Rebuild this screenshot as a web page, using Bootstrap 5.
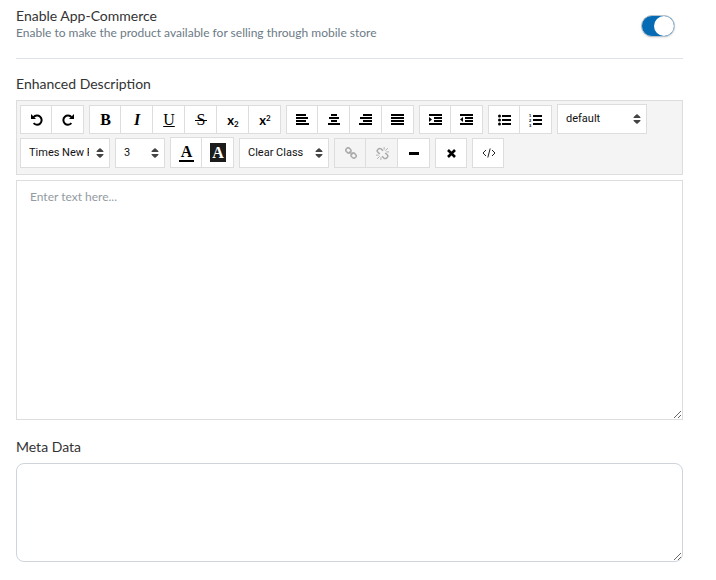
<!DOCTYPE html>
<html lang="en">
<head>
<meta charset="utf-8">
<meta name="viewport" content="width=device-width, initial-scale=1">
<title>Product settings</title>
<link href="https://cdn.jsdelivr.net/npm/bootstrap@5.3.0/dist/css/bootstrap.min.css" rel="stylesheet">
<style>
body { font-family: Lato, sans-serif; font-size: 14px; line-height: 18px; color: #333; background: #fff; }
.page { padding: 7px 33px 0 16px; }
.hint { font-size: 12px; line-height: 16px; color: #6c7a86; }
.setting { height: 52px; }
.setting-switch { min-height: 0; padding: 0 8px 0 0; margin: 8px 0 0; }
.setting-switch .form-check-input {
  width: 34px; height: 22px; margin: 0; float: none; display: block; border: 1px solid #b9c3cb;
  box-shadow: 0 1px 2px rgba(0,0,0,.1);
  background-size: 20px 20px;
}
.setting-switch .form-check-input:checked {
  background-color: #046bb4;
  background-image: url("data:image/svg+xml,%3csvg xmlns='http://www.w3.org/2000/svg' viewBox='0 0 20 20'%3e%3ccircle r='10' cx='10' cy='10' fill='%23fff'/%3e%3c/svg%3e");
}
.field-label { margin: 16px 0 7px; display: block; }
.editor-text + .field-label { margin-top: 18px; }
.editor-bar { background: #f4f4f4; border: 1px solid #ddd; padding: 3px 3px 6px; gap: 3px 5px; }
.tool-group .btn {
  --bs-btn-border-radius: 0; --bs-btn-bg: #fff; --bs-btn-border-color: #ddd; --bs-btn-color: #000;
  --bs-btn-disabled-bg: #f4f4f4; --bs-btn-disabled-border-color: #ddd; --bs-btn-disabled-color: #aaa; --bs-btn-disabled-opacity: 1;
  width: 32px; height: 30px; padding: 0 0 0 1px; line-height: 20px;
  display: flex; align-items: center; justify-content: center;
}
.tool-group .btn + .btn { border-left: 0; }
.tool-group.short .btn { height: 29px; }
.tool-group.tall .btn { height: 31px; }
.serif { font: bold 16px/18px "Liberation Serif", serif; }
.script { font: bold 13px/18px Lato, sans-serif; }
.script sub, .script sup { font-size: 8px; }
.ink { border-bottom: 2px solid #000; padding: 0 2px; line-height: 16px; }
.paper { background: #1c1c1c; color: #fff; width: 16px; line-height: 19px; text-align: center; }
.editor-bar .form-select {
  width: 90px; height: 30px; border: 1px solid #ddd; border-radius: 0; padding: 0 20px 0 8px;
  font: 11px/16px Roboto, sans-serif; color: #111; background-color: #fff;
  background-image: url("data:image/svg+xml,%3csvg xmlns='http://www.w3.org/2000/svg' viewBox='0 0 8 10'%3e%3cpath d='M1 4 Q0 4 .7 3 L3.3 .5 Q4 0 4.7 .5 L7.3 3 Q8 4 7 4ZM1 6 Q0 6 .7 7 L3.3 9.5 Q4 10 4.7 9.5 L7.3 7 Q8 6 7 6Z' fill='%23444'/%3e%3c/svg%3e");
  background-size: 8px 10px; background-position: right 5px center;
}
.editor-bar .form-select.narrow { width: 50px; }
.editor-text { height: 240px; margin-top: 5px; border: 1px solid #ddd; border-radius: 0; padding: 7px 13px; font-size: 12px; line-height: 18px; }
.editor-text::placeholder { color: #939ba2; }
.meta-text { height: 99px; border: 1px solid #ced4da; border-radius: 8px; }
svg { display: block; }
</style>
</head>
<body>
<main class="page">
  <div class="setting d-flex justify-content-between border-bottom">
    <div>
      <label for="appCommerce" class="d-block">Enable App-Commerce</label>
      <div class="hint" id="appHint">Enable to make the product available for selling through mobile store</div>
    </div>
    <div class="form-check form-switch setting-switch">
      <input class="form-check-input" type="checkbox" role="switch" id="appCommerce" aria-describedby="appHint" checked>
    </div>
  </div>

  <label for="description" class="field-label">Enhanced Description</label>
  <div class="editor-bar d-flex flex-wrap align-items-end" role="toolbar" aria-label="Formatting">
    <div class="tool-group short d-flex">
      <button type="button" class="btn" aria-label="Undo"><svg width="12" height="12" viewBox="0 0 12 12" fill="none" stroke="#000" stroke-width="2"><path d="M2.500 3.200A4.600 4.600 0 1 1 2.600 9.200"/><path d="M0 0v5h5z" fill="#000" stroke="none"/></svg></button>
      <button type="button" class="btn" aria-label="Redo"><svg width="12" height="12" viewBox="0 0 12 12" fill="none" stroke="#000" stroke-width="2"><path d="M9.500 3.200A4.600 4.600 0 1 0 9.400 9.200"/><path d="M12 0v5H7z" fill="#000" stroke="none"/></svg></button>
    </div>
    <div class="tool-group short d-flex">
      <button type="button" class="btn" aria-label="Bold"><span class="serif">B</span></button>
      <button type="button" class="btn" aria-label="Italic"><em class="serif fst-italic">I</em></button>
      <button type="button" class="btn" aria-label="Underline"><u class="serif fw-normal">U</u></button>
      <button type="button" class="btn" aria-label="Strikethrough"><svg width="14" height="18" viewBox="0 0 14 18"><text x="7" y="14" text-anchor="middle" font-family="Liberation Serif, serif" font-size="16">S</text><path d="M1 9.500h12" stroke="#000"/></svg></button>
      <button type="button" class="btn" aria-label="Subscript"><span class="script">x<sub>2</sub></span></button>
      <button type="button" class="btn" aria-label="Superscript"><span class="script">x<sup>2</sup></span></button>
    </div>
    <div class="tool-group short d-flex">
      <button type="button" class="btn" aria-label="Align left"><svg width="14" height="11" viewBox="0 0 14 11" stroke="#000" stroke-width="2"><path d="M0 1h10M0 4h12M0 7h10M0 10h13"/></svg></button>
      <button type="button" class="btn" aria-label="Align center"><svg width="14" height="11" viewBox="0 0 14 11" stroke="#000" stroke-width="2"><path d="M4 1h6M2 4h10M4 7h6M1 10h12"/></svg></button>
      <button type="button" class="btn" aria-label="Align right"><svg width="14" height="11" viewBox="0 0 14 11" stroke="#000" stroke-width="2"><path d="M4 1h9M1 4h12M4 7h9M0 10h13"/></svg></button>
      <button type="button" class="btn" aria-label="Justify"><svg width="14" height="11" viewBox="0 0 14 11" stroke="#000" stroke-width="2"><path d="M0 1h13M0 4h13M0 7h13M0 10h13"/></svg></button>
    </div>
    <div class="tool-group short d-flex">
      <button type="button" class="btn" aria-label="Indent"><svg width="14" height="12" viewBox="0 0 14 12" stroke="#000" stroke-width="2"><path d="M0 1h13M5 4h8M5 7h8M0 10h13"/><path d="M0 3v5l3-2.500z" stroke="none"/></svg></button>
      <button type="button" class="btn" aria-label="Outdent"><svg width="14" height="12" viewBox="0 0 14 12" stroke="#000" stroke-width="2"><path d="M0 1h13M5 4h8M5 7h8M0 10h13"/><path d="M3 3v5L0 5.500z" stroke="none"/></svg></button>
    </div>
    <div class="tool-group short d-flex">
      <button type="button" class="btn" aria-label="Bulleted list"><svg width="14" height="12" viewBox="0 0 14 12" stroke="#000" stroke-width="2"><path d="M4 2h9M4 6h9M4 10h9"/><g stroke="none"><circle cx="1.500" cy="2" r="1.500"/><circle cx="1.500" cy="6" r="1.500"/><circle cx="1.500" cy="10" r="1.500"/></g></svg></button>
      <button type="button" class="btn" aria-label="Numbered list"><svg width="14" height="14" viewBox="0 0 14 14"><path d="M4 3h9M4 7h9M4 11h9" stroke="#000" stroke-width="2"/><g font-family="Liberation Sans, sans-serif" font-size="4" font-weight="bold"><text x="0" y="4">1</text><text x="0" y="9">2</text><text x="0" y="14">3</text></g></svg></button>
    </div>
    <select class="form-select" aria-label="Text block"><option>default</option><option>Heading 1</option><option>Paragraph</option></select>
    <select class="form-select" aria-label="Font"><option>Times New Roman</option><option>Arial</option></select>
    <select class="form-select narrow" aria-label="Font size"><option>3</option><option>4</option></select>
    <div class="tool-group tall d-flex">
      <button type="button" class="btn" aria-label="Text color"><span class="serif ink">A</span></button>
      <button type="button" class="btn" aria-label="Background color"><span class="serif paper">A</span></button>
    </div>
    <select class="form-select" aria-label="Custom class"><option>Clear Class</option></select>
    <div class="tool-group d-flex">
      <button type="button" class="btn" aria-label="Insert link" disabled><svg width="12" height="12" viewBox="0 0 12 12" fill="none" stroke="#aaa" stroke-width="1.500"><rect x="-2.600" y="-2.200" width="5.200" height="4.400" rx="2" transform="translate(3.400 3.400) rotate(45)"/><rect x="-2.600" y="-2.200" width="5.200" height="4.400" rx="2" transform="translate(8.600 8.600) rotate(45)"/><path d="M4.500 4.500l3 3"/></svg></button>
      <button type="button" class="btn" aria-label="Remove link" disabled><svg width="13" height="13" viewBox="0 0 12 12" fill="none" stroke="#aaa" stroke-width="1.400"><path d="M6.500 3.500L4.800 1.800Q3.500.8 2.200 1.800L1.600 2.500Q.6 3.600 1.600 4.700L3.500 6.500M5.500 8.500L7.200 10.200Q8.500 11.200 9.800 10.200L10.500 9.500Q11.400 8.300 10.400 7.200L8.500 5.500"/><path d="M0 7.500h2.500M1 11l2.500-2.500M4.500 12V9.500M12 4.500H9.500M11 1L8.500 3.500M7.500 0v2.500" stroke-width=".8"/></svg></button>
      <button type="button" class="btn" aria-label="Horizontal line"><svg width="10" height="3"><path d="M0 1.500h10" stroke="#000" stroke-width="3"/></svg></button>
    </div>
    <div class="tool-group d-flex">
      <button type="button" class="btn" aria-label="Clear formatting"><svg width="9" height="9" viewBox="0 0 9 9"><path d="M1 1l7 7M8 1L1 8" stroke="#000" stroke-width="2.600"/></svg></button>
    </div>
    <div class="tool-group d-flex">
      <button type="button" class="btn" aria-label="Edit HTML"><svg width="14" height="10" viewBox="0 0 14 10" fill="none" stroke="#222"><path d="M4 2L1 5l3 3M10 2l3 3-3 3M8.200.5l-2.400 9"/></svg></button>
    </div>
  </div>
  <textarea class="form-control editor-text" id="description" placeholder="Enter text here..."></textarea>

  <label for="meta" class="field-label">Meta Data</label>
  <textarea class="form-control meta-text" id="meta"></textarea>
</main>
<script src="https://cdn.jsdelivr.net/npm/bootstrap@5.3.0/dist/js/bootstrap.bundle.min.js"></script>
</body>
</html>
